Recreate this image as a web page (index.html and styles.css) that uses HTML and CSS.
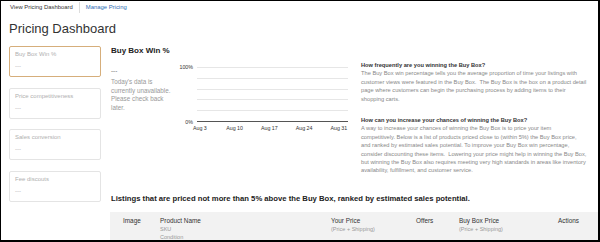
FILE: index.html
```html
<!DOCTYPE html>
<html lang="en">
<head>
    <meta charset="UTF-8">
    <meta name="viewport" content="width=device-width, initial-scale=1.0">
    <title>Pricing Dashboard</title>
    <link rel="stylesheet" href="styles.css">
</head>
<body>
    <div class="frame">
        <div class="tabs">
            <a class="tab active" href="#">View Pricing Dashboard</a>
            <a class="tab" href="#">Manage Pricing</a>
        </div>

        <h1>Pricing Dashboard</h1>

        <div class="dashboard">
            <div class="sidebar">
                <div class="card selected">
                    <div class="card-label">Buy Box Win %</div>
                    <div class="card-value">---</div>
                </div>
                <div class="card">
                    <div class="card-label">Price competitiveness</div>
                    <div class="card-value">---</div>
                </div>
                <div class="card">
                    <div class="card-label">Sales conversion</div>
                    <div class="card-value">---</div>
                </div>
                <div class="card">
                    <div class="card-label">Fee discouts</div>
                    <div class="card-value">---</div>
                </div>
            </div>

            <div class="main">
                <div class="overview">
                    <div class="summary">
                        <h2>Buy Box Win %</h2>
                        <div class="summary-value">---</div>
                        <p>Today's data is currently unavailable. Please check back later.</p>
                    </div>

                    <div class="chart">
                        <div class="y-axis">
                            <span>100%</span>
                            <span>0%</span>
                        </div>
                        <div class="plot-area">
                            <div class="plot">
                                <div class="grid-row"></div>
                                <div class="grid-row"></div>
                                <div class="grid-row"></div>
                                <div class="grid-row"></div>
                                <div class="grid-row"></div>
                            </div>
                            <div class="x-axis">
                                <span>Aug 3</span>
                                <span>Aug 10</span>
                                <span>Aug 17</span>
                                <span>Aug 24</span>
                                <span>Aug 31</span>
                            </div>
                        </div>
                    </div>

                    <div class="info">
                        <h3>How frequently are you winning the Buy Box?</h3>
                        <p>The Buy Box win percentage tells you the average proportion of time your listings with<br>
                        customer views were featured in the Buy Box.&nbsp; The Buy Box is the box on a product detail<br>
                        page where customers can begin the purchasing process by adding items to their<br>
                        shopping carts.</p>
                        <h3>How can you increase your chances of winning the Buy Box?</h3>
                        <p>A way to increase your chances of winning the Buy Box is to price your item<br>
                        competitively. Below is a list of products priced close to (within 5%) the Buy Box price,<br>
                        and ranked by estimated sales potential. To improve your Buy Box win percentage,<br>
                        consider discounting these items.&nbsp; Lowering your price might help in winning the Buy Box,<br>
                        but winning the Buy Box also requires meeting very high standards in areas like inventory<br>
                        availability, fulfillment, and customer service.</p>
                    </div>
                </div>

                <div class="listings">
                    <h2>Listings that are priced not more than 5% above the Buy Box, ranked by estimated sales potential.</h2>
                    <div class="table-head">
                        <div>Image</div>
                        <div>Product Name<span class="sub">SKU</span><span class="sub">Condition</span></div>
                        <div>Your Price<span class="sub">(Price + Shipping)</span></div>
                        <div>Offers</div>
                        <div>Buy Box Price<span class="sub">(Price + Shipping)</span></div>
                        <div>Actions</div>
                    </div>
                </div>
            </div>
        </div>
    </div>
</body>
</html>
```

FILE: styles.css
```css
* {
    margin: 0;
    padding: 0;
    box-sizing: border-box;
}

body {
    font-family: "Liberation Sans", Arial, sans-serif;
    background: #fff;
    color: #333;
}

.frame {
    width: 600px;
    height: 242px;
    border: 1px solid #000;
    border-right-width: 2px;
    border-bottom-width: 2px;
    overflow: hidden;
}

/* top tabs */
.tabs {
    display: flex;
    align-items: center;
    height: 12px;
    padding-left: 9px;
    font-size: 5.9px;
}

.tab {
    text-decoration: none;
    color: #2f6db5;
    line-height: 11px;
}

.tab.active {
    color: #333;
    padding-right: 6px;
    border-right: 1px solid #ddd;
}

.tab + .tab {
    padding-left: 6px;
}

h1 {
    font-size: 13px;
    font-weight: normal;
    line-height: 15px;
    color: #333;
    margin: 8px 0 10px 8px;
}

/* left metric cards */
.dashboard {
    display: flex;
    gap: 10px;
    padding-left: 8px;
}

.sidebar {
    width: 92px;
    flex: none;
    display: flex;
    flex-direction: column;
    gap: 10.5px;
}

.card {
    height: 31px;
    border: 1px solid #e4e4e4;
    border-radius: 2px;
    padding: 3px 5px 0;
    font-size: 6px;
    line-height: 8px;
    color: #b0b0b0;
}

.card.selected {
    border-color: #d6ae7b;
}

.card-value {
    margin-top: 4px;
}

/* main area */
.main {
    flex: 1;
    min-width: 0;
}

.overview {
    display: flex;
}

.summary {
    width: 65px;
    flex: none;
}

.summary h2 {
    font-size: 8px;
    line-height: 10px;
    color: #222;
}

.summary-value {
    font-size: 6.3px;
    line-height: 8px;
    color: #777;
    margin-top: 11px;
}

.summary p {
    font-size: 6.3px;
    line-height: 8.6px;
    color: #999;
    margin-top: 3px;
}

.chart {
    width: 172px;
    flex: none;
    display: flex;
    padding-top: 21px;
    font-size: 5.3px;
    color: #333;
}

.y-axis {
    width: 21px;
    height: 61px;
    display: flex;
    flex-direction: column;
    justify-content: space-between;
    align-items: flex-end;
    padding-right: 4px;
    line-height: 6px;
    margin-top: -3px;
}

.plot-area {
    width: 151px;
}

.plot {
    border-bottom: 1.5px solid #555;
}

.grid-row {
    height: 10.8px;
    border-top: 1px solid #e6e6e6;
}

.x-axis {
    display: grid;
    grid-template-columns: repeat(5, 34.75px);
    margin-left: -14.5px;
    margin-top: 3px;
    text-align: center;
}

.info {
    width: 245px;
    flex: none;
    margin-left: 13px;
    padding-top: 15px;
    font-size: 5.7px;
    line-height: 8.4px;
    white-space: nowrap;
}

.info h3 {
    font-size: 5.7px;
    color: #333;
}

.info p {
    color: #888;
    margin-bottom: 13px;
}

/* listings table */
.listings {
    margin-top: 6px;
}

.listings h2 {
    font-size: 7.7px;
    line-height: 10px;
    color: #222;
    margin-bottom: 8px;
}

.table-head {
    display: grid;
    grid-template-columns: 37px 171px 85px 43px 99px auto;
    margin-left: -1px;
    padding: 5px 0 4px 13px;
    background: #f2f2f2;
    font-size: 6.4px;
    line-height: 8px;
    color: #333;
}

.sub {
    display: block;
    font-size: 5.5px;
    color: #999;
}
```
